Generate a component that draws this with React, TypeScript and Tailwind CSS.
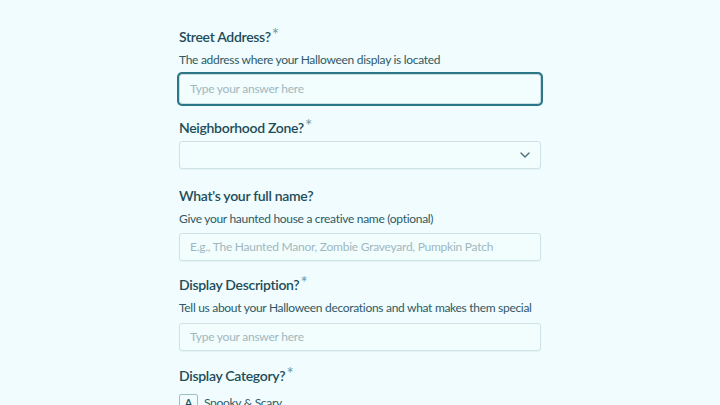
import { ChevronDown } from "lucide-react";

const font = { fontFamily: "Lato, 'Noto Sans', sans-serif" };

function Label({ text, required }: { text: string; required?: boolean }) {
  return (
    <div className="flex items-start text-[14px] font-semibold leading-5 tracking-[-0.3px] text-[#1d4c5a]">
      <span>{text}</span>
      {required ? <span className="ml-[1px] -mt-[2px] text-[17px] font-normal leading-5 text-[#6f9aa4]">*</span> : null}
    </div>
  );
}

function Help({ text }: { text: string }) {
  return <p className="mt-[3px] text-[12px] leading-5 tracking-[-0.3px] text-[#2f5966]">{text}</p>;
}

function TextInput({ placeholder, focused }: { placeholder: string; focused?: boolean }) {
  return (
    <div
      className={
        focused
          ? "flex h-[30px] items-center rounded-[3px] border border-[#c9dde2] bg-[#f2fdfe] px-[10px] shadow-[0_0_0_2px_#2b7687]"
          : "flex h-[28px] items-center rounded-[3px] border border-[#cfe3e7] bg-[#f2fdfe] px-[10px] shadow-[0_1px_1px_rgba(30,80,90,0.06)]"
      }
    >
      <span className="whitespace-nowrap text-[12px] tracking-[-0.25px] text-[#9fb8be]">{placeholder}</span>
    </div>
  );
}

export default function App() {
  return (
    <div className="h-[405px] w-full overflow-hidden bg-[#f0fcfd]" style={font}>
      <div className="mx-auto flex w-[362px] flex-col pt-[27px]">
        <section>
          <Label text="Street Address?" required />
          <Help text="The address where your Halloween display is located" />
          <div className="mt-[4px]">
            <TextInput placeholder="Type your answer here" focused />
          </div>
        </section>

        <section className="mt-[14px]">
          <Label text="Neighborhood Zone?" required />
          <div className="mt-[3px] flex h-[28px] items-center justify-end rounded-[3px] border border-[#cfe3e7] bg-[#f2fdfe] px-[7px] shadow-[0_1px_1px_rgba(30,80,90,0.06)]">
            <ChevronDown className="h-4 w-4 text-[#4b6e78]" strokeWidth={2} />
          </div>
        </section>

        <section className="mt-[17px]">
          <Label text="What's your full name?" />
          <Help text="Give your haunted house a creative name (optional)" />
          <div className="mt-[4px]">
            <TextInput placeholder="E.g., The Haunted Manor, Zombie Graveyard, Pumpkin Patch" />
          </div>
        </section>

        <section className="mt-[14px]">
          <Label text="Display Description?" required />
          <Help text="Tell us about your Halloween decorations and what makes them special" />
          <div className="mt-[5px]">
            <TextInput placeholder="Type your answer here" />
          </div>
        </section>

        <section className="mt-[15px]">
          <Label text="Display Category?" required />
          <div className="mt-[8px] flex items-center gap-[6px]">
            <span className="flex h-[18px] w-[19px] items-center justify-center rounded-[2px] border border-[#9fbfc6] text-[11px] font-semibold text-[#1d4c5a]">
              A
            </span>
            <span className="text-[12px] tracking-[-0.3px] text-[#2f5966]">Spooky &amp; Scary</span>
          </div>
        </section>
      </div>
    </div>
  );
}
